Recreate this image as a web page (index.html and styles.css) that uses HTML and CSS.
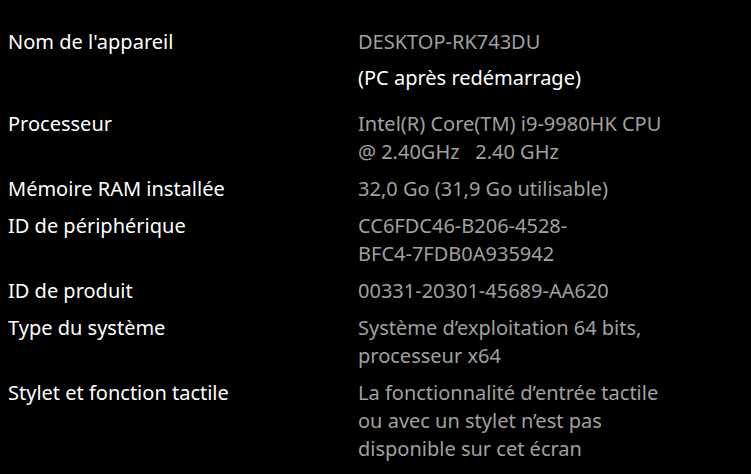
FILE: index.html
```html
<!DOCTYPE html>
<html lang="fr">
<head>
    <meta charset="UTF-8">
    <meta name="viewport" content="width=device-width, initial-scale=1.0">
    <title>Spécifications de l'appareil</title>
    <link rel="stylesheet" href="styles.css">
</head>
<body>

<div class="specs">
    <div class="spec-row">
        <div class="label">Nom de l'appareil</div>
        <div class="value">
            DESKTOP-RK743DU
            <div class="note">(PC après redémarrage)</div>
        </div>
    </div>
    <div class="spec-row">
        <div class="label">Processeur</div>
        <div class="value">Intel(R) Core(TM) i9-9980HK CPU<br>@ 2.40GHz&nbsp;&nbsp;&nbsp;2.40 GHz</div>
    </div>
    <div class="spec-row">
        <div class="label">Mémoire RAM installée</div>
        <div class="value">32,0 Go (31,9 Go utilisable)</div>
    </div>
    <div class="spec-row">
        <div class="label">ID de périphérique</div>
        <div class="value">CC6FDC46-B206-4528-<br>BFC4-7FDB0A935942</div>
    </div>
    <div class="spec-row">
        <div class="label">ID de produit</div>
        <div class="value">00331-20301-45689-AA620</div>
    </div>
    <div class="spec-row">
        <div class="label">Type du système</div>
        <div class="value">Système d’exploitation 64 bits,<br>processeur x64</div>
    </div>
    <div class="spec-row">
        <div class="label">Stylet et fonction tactile</div>
        <div class="value">La fonctionnalité d’entrée tactile<br>ou avec un stylet n’est pas<br>disponible sur cet écran</div>
    </div>
</div>

</body>
</html>
```

FILE: styles.css
```css
* {
    margin: 0;
    padding: 0;
    box-sizing: border-box;
}

body {
    font-family: 'Noto Sans', 'Open Sans', sans-serif;
    background-color: #000;
    color: #fff;
    padding: 28px 8px 0;
    font-size: 20px;
    line-height: 28px;
}

.specs {
    display: flex;
    flex-direction: column;
    gap: 9px;
}

.spec-row {
    display: grid;
    grid-template-columns: 350px 1fr;
}

.label {
    color: #fff;
}

.value {
    color: #a0a0a0;
}

.value .note {
    color: #fff;
    margin-top: 8px;
    margin-bottom: 9px;
}
```
